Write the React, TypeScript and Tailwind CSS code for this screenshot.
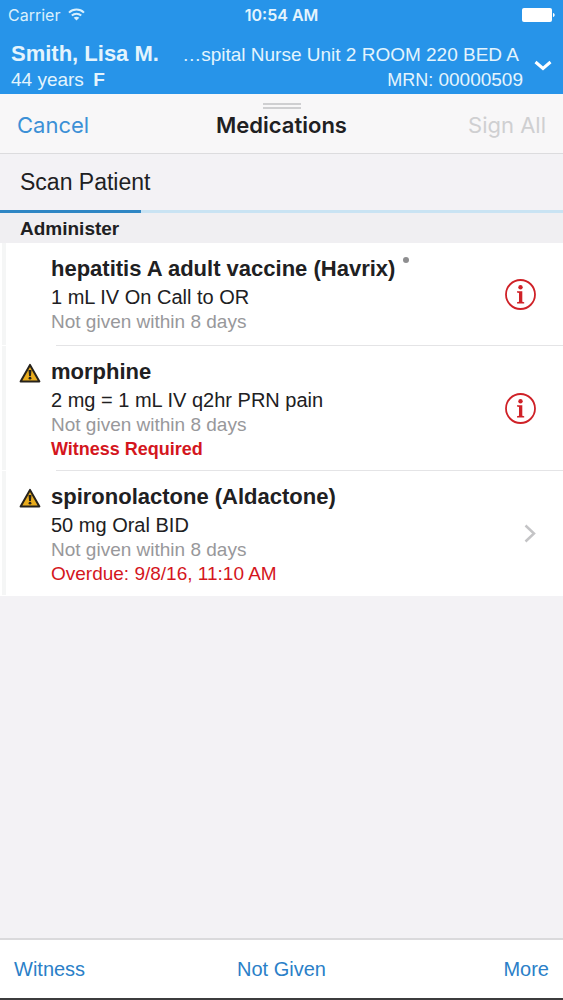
import { useState } from 'react';
import { clsx } from 'clsx';

type Medication = {
  name: string;
  dose: string;
  lastGiven: string;
  note?: string;
  noteBold?: boolean;
  warning?: boolean;
  marker?: boolean;
  action: 'info' | 'open';
};

const medications: Medication[] = [
  {
    name: 'hepatitis A adult vaccine (Havrix)',
    dose: '1 mL IV On Call to OR',
    lastGiven: 'Not given within 8 days',
    marker: true,
    action: 'info',
  },
  {
    name: 'morphine',
    dose: '2 mg = 1 mL IV q2hr PRN pain',
    lastGiven: 'Not given within 8 days',
    note: 'Witness Required',
    noteBold: true,
    warning: true,
    action: 'info',
  },
  {
    name: 'spironolactone (Aldactone)',
    dose: '50 mg Oral BID',
    lastGiven: 'Not given within 8 days',
    note: 'Overdue: 9/8/16, 11:10 AM',
    warning: true,
    action: 'open',
  },
];

const WifiIcon = () => (
  <svg width="17" height="13" viewBox="0 0 17 13" fill="none" stroke="currentColor" strokeWidth="2" aria-hidden="true">
    <path d="M1 4.6C5.2.6 11.8.6 16 4.6" />
    <path d="M3.8 7.6c2.7-2.5 6.7-2.5 9.4 0" />
    <path d="M8.5 12.6 5.7 9.7c1.6-1.4 4-1.4 5.6 0z" fill="currentColor" stroke="none" />
  </svg>
);

const BatteryIcon = () => (
  <svg width="33" height="14" viewBox="0 0 33 14" fill="currentColor" aria-hidden="true">
    <rect width="30" height="14" rx="2" />
    <path d="M31 5c2.2.4 2.2 3.6 0 4z" />
  </svg>
);

const WarningIcon = () => (
  <svg width="22" height="20" viewBox="0 0 22 20" aria-hidden="true">
    <path d="M11 1.9 20.4 18.5H1.6z" fill="#e9ac1d" stroke="#26221c" strokeWidth="2" strokeLinejoin="round" />
    <path d="M9.5 7h3l-.6 6h-1.8z" fill="#26221c" />
    <circle cx="11" cy="15.2" r="1.4" fill="#26221c" />
  </svg>
);

const InfoIcon = () => (
  <svg width="31" height="31" viewBox="0 0 31 31" fill="#cf2127" aria-hidden="true">
    <circle cx="15.5" cy="15.5" r="14.5" fill="none" stroke="#cf2127" strokeWidth="1.8" />
    <circle cx="15.5" cy="8.3" r="2.2" />
    <path d="M12 12.2h5.3v10.5l1.9.6v1.2h-7.200v-1.200l2-.6v-8.700l-2-.6z" />
  </svg>
);

const ChevronRightIcon = () => (
  <svg width="12" height="19" viewBox="0 0 12 19" fill="none" stroke="#c4c4c6" strokeWidth="2.5" aria-hidden="true">
    <path d="M1.5 1.5 10 9.5l-8.5 8" />
  </svg>
);

const ChevronDownIcon = () => (
  <svg width="18" height="11" viewBox="0 0 18 11" fill="none" stroke="currentColor" strokeWidth="3" aria-hidden="true">
    <path d="M1.5 2 9 8.5 16.5 2" />
  </svg>
);

const MedicationRow = ({ med, last }: { med: Medication; last: boolean }) => (
  <li className="bg-white">
    <div className="flex">
      <div className="ml-0.5 w-1 shrink-0 bg-[#f5f6f6]" />
      <div className="flex w-[45px] shrink-0 items-start pt-[17px] pl-[13px]">{med.warning && <WarningIcon />}</div>
      <div className={clsx('min-w-0 flex-1 pt-3', med.note ? 'pb-2' : 'pb-3')}>
        <h3 className="flex items-start gap-2 text-[22px] leading-7 font-bold">
          {med.name}
          {med.marker && <span className="mt-0.5 size-1.5 rounded-full bg-[#8e8e90]" />}
        </h3>
        <p className="text-[20px] leading-7">{med.dose}</p>
        <p className="text-[19px] leading-[22px] text-[#98989b]">{med.lastGiven}</p>
        {med.note && (
          <p className={clsx('leading-[26px] text-[#d4161d]', med.noteBold ? 'text-[18px] font-bold' : 'text-[19px]')}>
            {med.note}
          </p>
        )}
      </div>
      <button
        type="button"
        aria-label={`${med.action === 'info' ? 'Information about' : 'Open'} ${med.name}`}
        className="flex shrink-0 items-center px-[27px]"
      >
        {med.action === 'info' ? <InfoIcon /> : <ChevronRightIcon />}
      </button>
    </div>
    <div className={clsx('ml-14 h-px', last ? 'bg-white' : 'bg-[#e4e4e6]')} />
  </li>
);

const App = () => {
  const [expanded, setExpanded] = useState(false);

  return (
    <div className="flex min-h-screen flex-col border-b-2 border-[#3c3c3e] bg-[#f3f2f5] font-['Liberation_Sans',Arial,sans-serif] text-[#202022]">
      <header className="bg-[#2794e9] text-white">
        {/* Status bar */}
        <div className="grid h-[29px] grid-cols-3 items-center px-2 font-['Inter',sans-serif] text-[16px]">
          <span className="flex items-center gap-2 text-[#d9f0fd]">
            Carrier <WifiIcon />
          </span>
          <span className="text-center font-semibold whitespace-nowrap text-[#e4f4fd]">10:54 AM</span>
          <span className="flex justify-end">
            <BatteryIcon />
          </span>
        </div>

        {/* Patient banner */}
        <div className="flex h-[65px] items-center pt-2 pl-[11px]">
          <div className="min-w-0 flex-1 text-[19px] text-[#e4f4fd]">
            <div className="flex items-baseline justify-between gap-3 leading-7">
              <h1 className="text-[22px] font-bold whitespace-nowrap">Smith, Lisa M.</h1>
              <span className="pr-1 whitespace-nowrap">…spital Nurse Unit 2 ROOM 220 BED A</span>
            </div>
            <div className="flex justify-between leading-[22px]">
              <span>
                44 years <b className="ml-1">F</b>
              </span>
              <span>
                <span className="text-[18px]">MRN:</span> <span>00000509</span>
              </span>
            </div>
          </div>
          <button
            type="button"
            aria-label="Patient details"
            aria-expanded={expanded}
            onClick={() => setExpanded(!expanded)}
            className="px-[11px] py-2"
          >
            <ChevronDownIcon />
          </button>
        </div>
      </header>

      <nav className="border-b border-[#dcdcde] bg-[#f8f7f8] pt-[9px] pb-3 font-['Inter',sans-serif] text-[22px]">
        <div className="mx-auto h-1.5 w-[38px] border-y-2 border-[#cfcfd1]" />
        <div className="grid h-8 grid-cols-3 items-center px-[17px]">
          <button type="button" className="justify-self-start text-[#3c90d6]">
            Cancel
          </button>
          <h2 className="text-center font-semibold">Medications</h2>
          <button type="button" disabled className="justify-self-end text-[#cfcfd1]">
            Sign All
          </button>
        </div>
      </nav>

      <main className="flex-1">
        <p className="px-5 text-[23px] leading-[56px]">Scan Patient</p>
        <div className="h-[3px] bg-[#c9e3f3]">
          <div className="h-full w-1/4 bg-[#2f86c4]" />
        </div>
        <h2 className="bg-[#f0eff2] px-5 pt-px text-[19px] leading-[29px] font-bold">Administer</h2>
        <ul>
          {medications.map((med, index) => (
            <MedicationRow key={med.name} med={med} last={index === medications.length - 1} />
          ))}
        </ul>
      </main>

      <footer className="grid h-[60px] grid-cols-3 items-center border-t-2 border-[#dadadc] bg-white px-[14px] text-[20px] text-[#2b7fc8]">
        <button type="button" className="justify-self-start">
          Witness
        </button>
        <button type="button">Not Given</button>
        <button type="button" className="justify-self-end">
          More
        </button>
      </footer>
    </div>
  );
};

export default App;
